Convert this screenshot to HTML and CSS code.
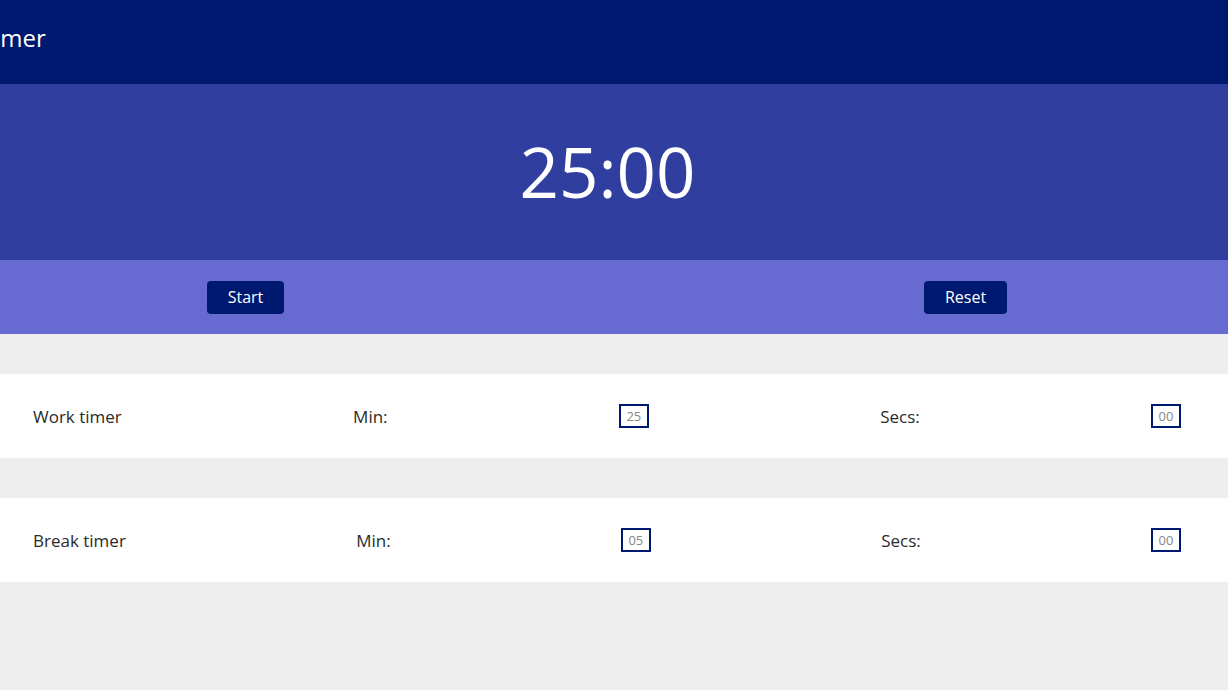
FILE: index.html
```html
<!DOCTYPE html>
<html>
<head>
<meta charset="utf-8">
<link rel="stylesheet" href="styles.css">
</head>
<body>
<header class="topbar">
  <h1 class="title">Timer</h1>
</header>
<section class="display">
  <div class="clock">25:00</div>
</section>
<section class="controls">
  <div class="ctrl-cell"><button class="btn">Start</button></div>
  <div class="ctrl-cell"></div>
  <div class="ctrl-cell"><button class="btn">Reset</button></div>
</section>
<main class="settings">
  <div class="row">
    <span class="label">Work timer</span>
    <span class="field">Min:</span>
    <input class="num" type="text" placeholder="25">
    <span class="field">Secs:</span>
    <input class="num" type="text" placeholder="00">
  </div>
  <div class="row">
    <span class="label">Break timer</span>
    <span class="field">Min:</span>
    <input class="num" type="text" placeholder="05">
    <span class="field">Secs:</span>
    <input class="num" type="text" placeholder="00">
  </div>
</main>
</body>
</html>
```
FILE: styles.css
```css
* { box-sizing: border-box; }
html, body {
  margin: 0;
  padding: 0;
  height: 100%;
  overflow: hidden;
}
body {
  background: #eeeeee;
  font-family: "Open Sans", "Noto Sans", sans-serif;
  color: #222;
}
.topbar {
  height: 84px;
  background: #001970;
  display: flex;
  align-items: center;
  overflow: hidden;
}
.title {
  margin: -8px 0 0 -19px;
  font-weight: 400;
  font-size: 24px;
  color: #fff;
  line-height: 1;
}
.display {
  height: 176px;
  background: #303f9f;
  display: flex;
  align-items: center;
  justify-content: center;
}
.clock {
  color: #fff;
  font-size: 69px;
  font-weight: 400;
  line-height: 1;
  margin-top: -1px;
  margin-left: -13px;
}
.controls {
  height: 74px;
  background: #666ad1;
  display: grid;
  grid-template-columns: 491px 1fr 525px;
  align-items: center;
}
.ctrl-cell {
  display: flex;
  justify-content: center;
}
.btn {
  background: #001970;
  color: #fff;
  border: none;
  border-radius: 4px;
  height: 33px;
  padding: 0 21px;
  font-family: inherit;
  font-size: 16px;
}
.settings {
  padding-top: 40px;
  display: flex;
  flex-direction: column;
  gap: 40px;
}
.row {
  height: 84px;
  background: #fff;
  display: flex;
  align-items: center;
  justify-content: space-between;
  padding: 0 47px 0 33px;
  font-size: 17px;
}
.label, .field { color: #2a2a2a; }
.num {
  width: 30px;
  height: 24px;
  border: 2px solid #001970;
  padding: 0;
  text-align: center;
  font-family: inherit;
  font-size: 13px;
  color: #888;
  outline: none;
}
.num::placeholder { color: #888; }
```
